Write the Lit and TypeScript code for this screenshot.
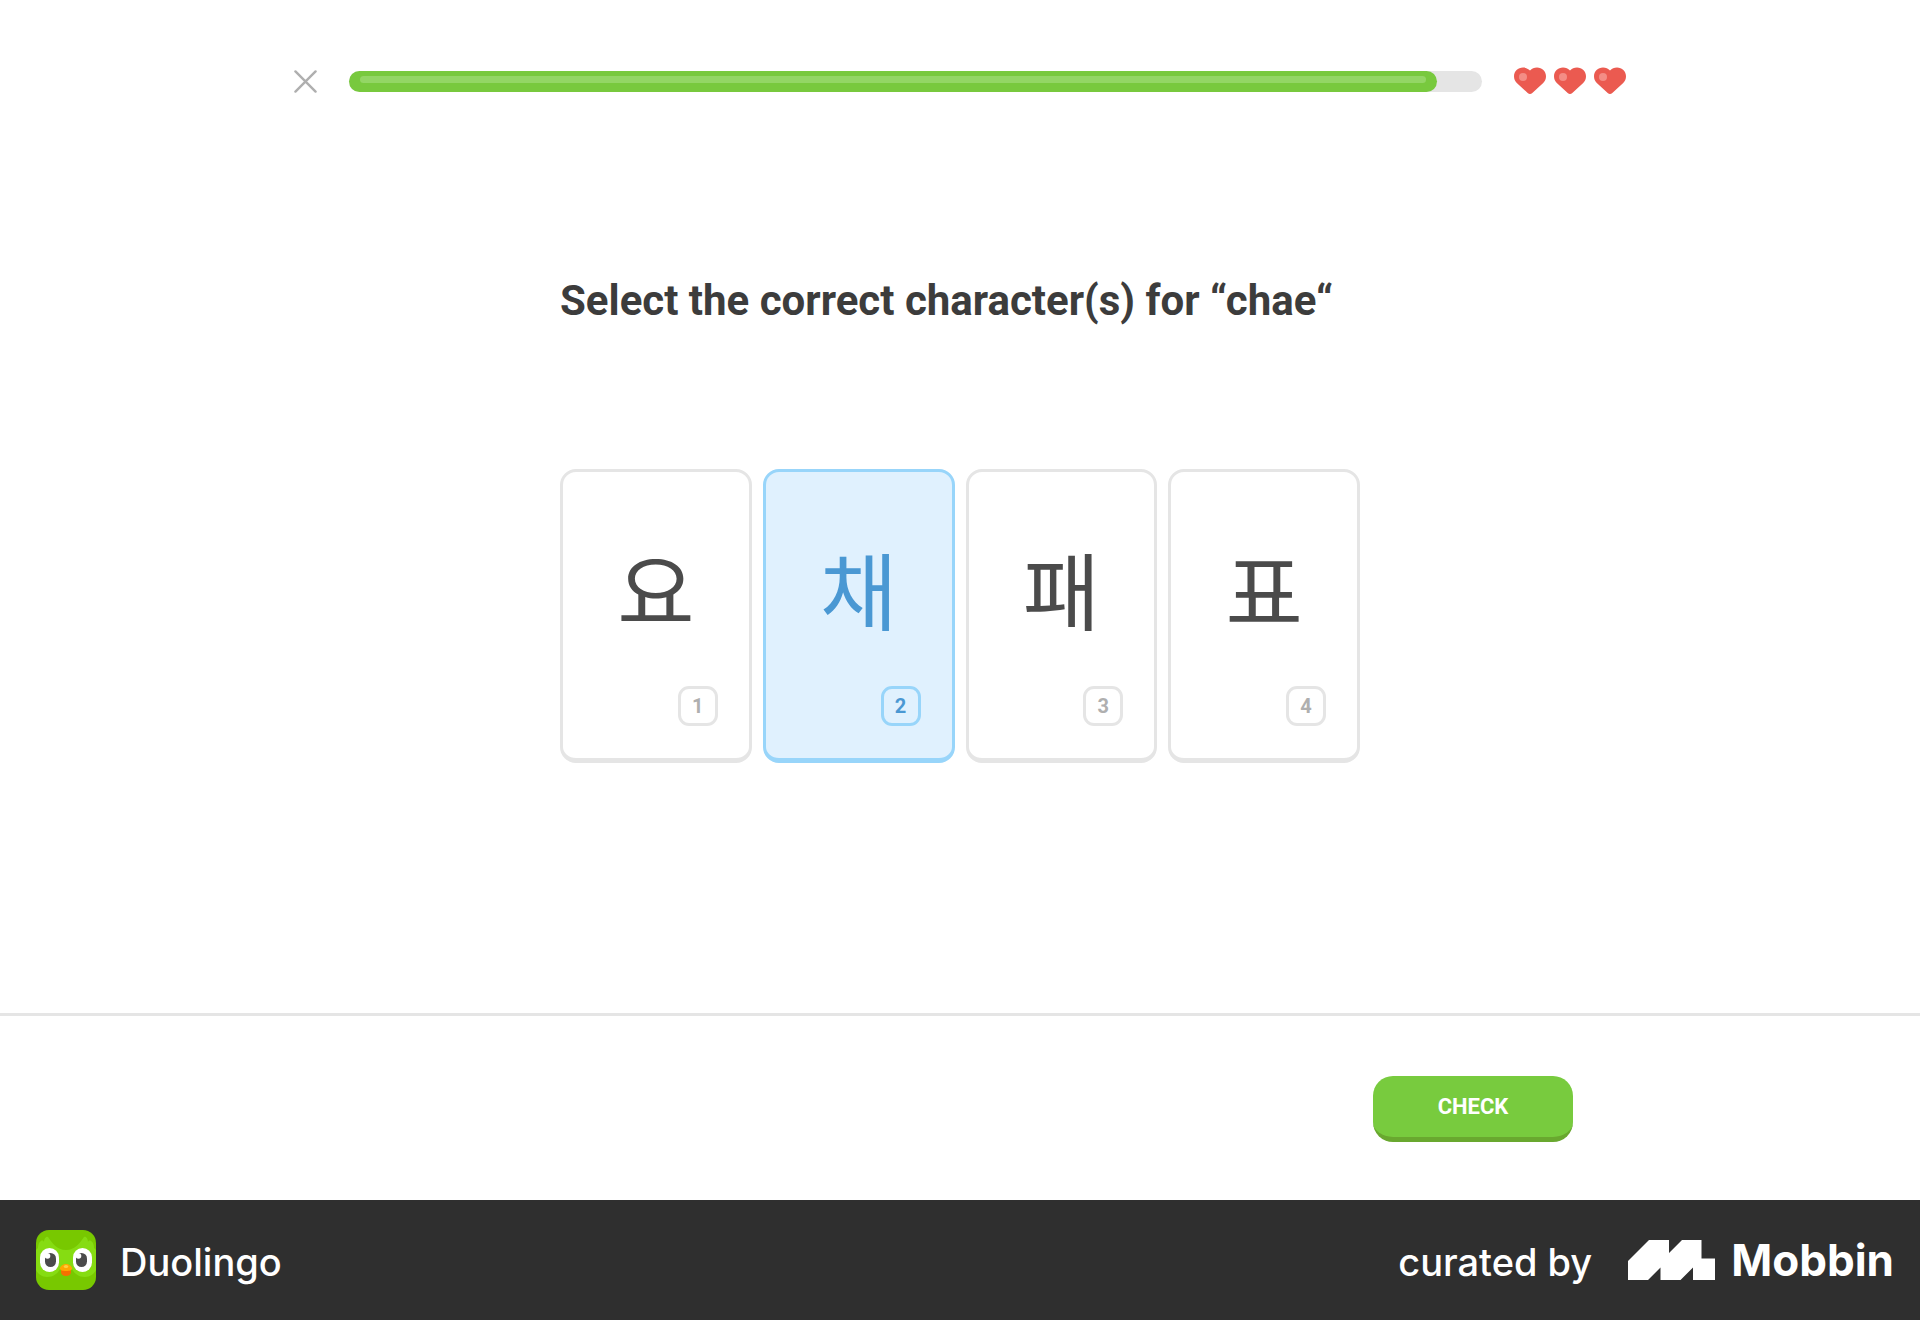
import { LitElement, html, css } from "lit";
import { customElement, state } from "lit/decorators.js";
import { classMap } from "lit/directives/class-map.js";

const CHOICES = ["요", "채", "패", "표"];
const HEARTS = [1, 2, 3];

const heart = html`<svg class="heart" viewBox="0 0 32 29" aria-hidden="true">
  <path fill="#eb5a50" d="M16 3.6C17.8 1.6 20.2.6 23 .6c5 0 9 3.900 9 8.700 0 2.700-1 4.900-2.800 6.600L18.300 26c-1.300 1.200-3.300 1.200-4.600 0L2.800 15.900C1 14.200 0 12 0 9.300 0 4.500 4 .6 9 .6c2.800 0 5.200 1 7 3z"/>
  <circle cx="9" cy="10" r="4" fill="#f48d85"/>
</svg>`;

const owl = html`<svg class="owl" viewBox="0 0 60 60" aria-hidden="true">
  <rect width="60" height="60" rx="13" fill="#78c800"/>
  <path fill="#86dc12" d="M0 20l2-2c0-3 1-6 3-7 1-1 3 0 3 1 0-3 2-6 4-5 4 6 9 13 18 13S44 13 48 7c2-1 4 2 4 5 0-1 2-2 3-1 2 1 3 4 3 7l2 2v20c-2 4-6 7-11 7-7 0-11-4-13-8H24c-2 4-6 8-13 8-5 0-9-3-11-7z"/>
  <rect x="4" y="18" width="19" height="24" rx="9.500" fill="#fff"/>
  <rect x="37" y="18" width="19" height="24" rx="9.500" fill="#fff"/>
  <rect x="9" y="23" width="11" height="14" rx="5.500" fill="#4b4b4b"/>
  <rect x="40" y="23" width="11" height="14" rx="5.500" fill="#4b4b4b"/>
  <circle cx="11.500" cy="26" r="2.800" fill="#fff"/>
  <circle cx="42.500" cy="26" r="2.800" fill="#fff"/>
  <path fill="#f47000" d="M25 40h10v2c0 2.500-2 4-5 4s-5-1.500-5-4z"/>
  <path fill="#ffa800" d="M24 38.500c0-2.500 3.500-4.500 6-4.500s6 2 6 4.500c0 1.800-2.500 2.500-6 2.500s-6-.7-6-2.500z"/>
  <ellipse cx="30" cy="36.500" rx="2.200" ry="1.500" fill="#ffd040"/>
</svg>`;

@customElement("app-root")
export class AppRoot extends LitElement {
  @state() private selected = 1;

  static styles = css`
    :host {
      display: flex;
      flex-direction: column;
      min-height: 100vh;
      background: #fff;
      color: #3c3c3c;
      font-family: Roboto, "Noto Sans CJK KR", sans-serif;
    }
    *, *::before, *::after { box-sizing: border-box; }
    .top {
      display: flex;
      align-items: center;
      gap: 32px;
      width: 100%;
      max-width: 1396px;
      height: 99px;
      margin: 0 auto;
      padding: 64px 32px 0;
    }
    .close {
      display: flex;
      padding: 0;
      border: 0;
      background: none;
      cursor: pointer;
    }
    .close svg { width: 23px; height: 23px; }
    .track {
      flex: 1;
      height: 21px;
      border-radius: 11px;
      background: #e5e5e5;
    }
    .fill {
      height: 100%;
      padding: 5px 11px;
      border-radius: 11px;
      background: #78c93e;
    }
    .shine {
      height: 7px;
      border-radius: 4px;
      background: #93d665;
    }
    .hearts { display: flex; gap: 8px; }
    .heart { display: block; width: 32px; height: 29px; }
    .main {
      flex: 1;
      width: 100%;
      max-width: 864px;
      margin: 0 auto;
      padding: 176px 32px 64px;
    }
    .title {
      margin: 0 0 142px;
      font-size: 42px;
      font-weight: 700;
      line-height: 52px;
    }
    .choices {
      display: grid;
      grid-template-columns: repeat(4, 1fr);
      gap: 11px;
      margin: 0;
      padding: 0;
      border: 0;
    }
    .card {
      position: relative;
      display: flex;
      flex-direction: column;
      align-items: center;
      height: 294px;
      padding: 56px 31px 32px;
      border: 3px solid #e5e5e5;
      border-bottom-width: 5px;
      border-radius: 16px;
      color: #4b4b4b;
      cursor: pointer;
    }
    .radio {
      position: absolute;
      inset: 0;
      margin: 0;
      opacity: 0;
      cursor: pointer;
    }
    .glyph {
      font-family: "Noto Sans CJK KR", sans-serif;
      font-size: 84px;
      line-height: 120px;
    }
    .key {
      display: grid;
      place-items: center;
      width: 40px;
      height: 40px;
      margin-top: auto;
      margin-left: auto;
      border: 3px solid #e5e5e5;
      border-radius: 11px;
      color: #afafaf;
      font-size: 20px;
      font-weight: 700;
      line-height: 24px;
    }
    .card.on { border-color: #98d5fa; background: #e0f1fe; color: #4a98d3; }
    .card.on .key { border-color: #98d5fa; color: #4a98d3; }
    .foot { border-top: 3px solid #e5e5e5; }
    .foot-in {
      display: flex;
      justify-content: flex-end;
      width: 100%;
      max-width: 1290px;
      margin: 0 auto;
      padding: 60px 32px 58px;
    }
    .check {
      width: 200px;
      height: 66px;
      padding: 0;
      border: 0;
      border-bottom: 5px solid #69a82f;
      border-radius: 20px;
      background: #78cb3e;
      color: #fff;
      font: 700 22px/28px Roboto, sans-serif;
      text-transform: uppercase;
      cursor: pointer;
    }
    .brand {
      display: flex;
      align-items: center;
      justify-content: space-between;
      height: 120px;
      padding: 0 26px 0 36px;
      background: #2f2f2f;
      color: #fff;
      font-family: Inter, sans-serif;
      font-size: 38px;
      font-weight: 500;
      line-height: 48px;
    }
    .app, .credit, .mobbin { display: flex; align-items: center; }
    .app { gap: 24px; }
    .credit { gap: 36px; }
    .name { padding-top: 4px; }
    .mobbin { gap: 16px; color: inherit; text-decoration: none; }
    .wordmark { font-size: 44px; font-weight: 700; }
    .owl { width: 60px; height: 60px; }
    .mark { width: 87px; height: 40px; }
  `;

  render() {
    return html`
      <header class="top">
        <button class="close" type="button" aria-label="Close">
          <svg viewBox="0 0 24 24" fill="none" stroke="#afafaf" stroke-width="2.500" stroke-linecap="round" aria-hidden="true">
            <path d="M1.500 1.500l21 21M22.500 1.500l-21 21"/>
          </svg>
        </button>
        <div class="track" role="progressbar" aria-label="Progress" aria-valuenow="96" aria-valuemin="0" aria-valuemax="100">
          <div class="fill" style="width:96%"><div class="shine"></div></div>
        </div>
        <div class="hearts" role="img" aria-label="3 hearts">${HEARTS.map(() => heart)}</div>
      </header>

      <main class="main">
        <h1 class="title" id="prompt">Select the correct character(s) for “chae“</h1>
        <fieldset class="choices" aria-labelledby="prompt">
          ${CHOICES.map((c, i) => html`
            <label class=${classMap({ card: true, on: i === this.selected })}>
              <input class="radio" type="radio" name="choice" .checked=${i === this.selected}
                @change=${() => { this.selected = i; }}>
              <span class="glyph" lang="ko">${c}</span>
              <span class="key">${i + 1}</span>
            </label>`)}
        </fieldset>
      </main>

      <div class="foot">
        <div class="foot-in"><button class="check" type="button">Check</button></div>
      </div>

      <footer class="brand">
        <div class="app">${owl}<span class="name">Duolingo</span></div>
        <div class="credit">
          <span class="name">curated by</span>
          <a class="mobbin" href="#">
            <svg class="mark" viewBox="0 0 87 40" fill="#fff" aria-hidden="true">
              <path d="M21 0h20v13L54 0h19.500v18.500H87V40H65V27.500L52.500 40H32.500V27.500L20 40H0V21z"/>
            </svg>
            <span class="wordmark">Mobbin</span>
          </a>
        </div>
      </footer>`;
  }
}
